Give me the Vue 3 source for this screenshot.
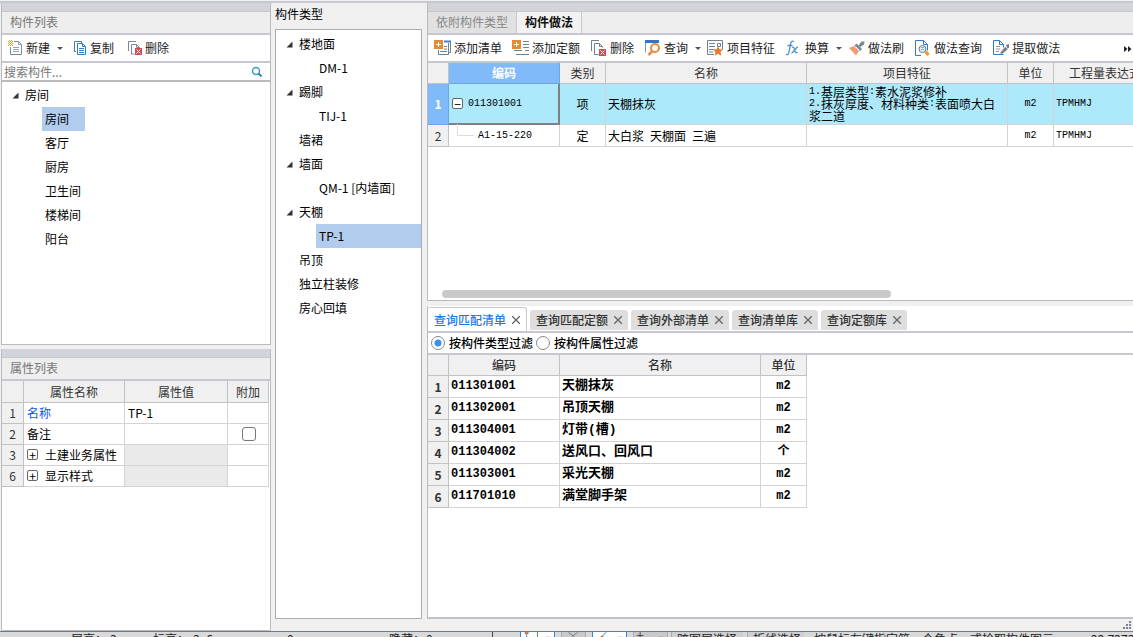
<script setup>
import { ref } from 'vue'

const roomTree = [
  { text: '房间', level: 0, open: true },
  { text: '房间', level: 1, selected: true },
  { text: '客厅', level: 1 },
  { text: '厨房', level: 1 },
  { text: '卫生间', level: 1 },
  { text: '楼梯间', level: 1 },
  { text: '阳台', level: 1 },
]
const typeTree = [
  { text: '楼地面', level: 0, open: true },
  { text: 'DM-1', level: 1 },
  { text: '踢脚', level: 0, open: true },
  { text: 'TIJ-1', level: 1 },
  { text: '墙裙', level: 0 },
  { text: '墙面', level: 0, open: true },
  { text: 'QM-1 [内墙面]', level: 1 },
  { text: '天棚', level: 0, open: true },
  { text: 'TP-1', level: 1, selected: true },
  { text: '吊顶', level: 0 },
  { text: '独立柱装修', level: 0 },
  { text: '房心回填', level: 0 },
]
const tools = [
  { icon: 'addList', text: '添加清单' },
  { icon: 'addQuota', text: '添加定额' },
  { icon: 'del', text: '删除' },
  { icon: 'query', text: '查询', menu: true },
  { icon: 'feature', text: '项目特征' },
  { icon: 'fx', text: '换算', menu: true },
  { icon: 'brush', text: '做法刷' },
  { icon: 'docQuery', text: '做法查询' },
  { icon: 'extract', text: '提取做法' },
]
const queryTabs = ['查询匹配清单', '查询匹配定额', '查询外部清单', '查询清单库', '查询定额库']
const matches = [
  ['011301001', '天棚抹灰', 'm2'],
  ['011302001', '吊顶天棚', 'm2'],
  ['011304001', '灯带(槽)', 'm2'],
  ['011304002', '送风口、回风口', '个'],
  ['011303001', '采光天棚', 'm2'],
  ['011701010', '满堂脚手架', 'm2'],
]
const feature = ['1.基层类型:素水泥浆修补', '2.抹灰厚度、材料种类:表面喷大白', '浆二道']
const filter = ref('type')
const keyword = ref('')

// Splits a string into half-width and full-width runs.
const runs = (s) => s.match(/[\x21-\x7e]+|[^\x21-\x7e]+/g).map((t) => ({ t, half: /[\x21-\x7e]/.test(t) }))
</script>

<template>
  <div class="window">
    <div class="dialog">
      <div class="col left">
        <section class="panel components">
          <div class="grip"></div>
          <h2 class="caption">构件列表</h2>
          <div class="toolbar narrow">
            <button class="tool">
              <svg width="16" height="16" viewBox="0 0 16 16" fill="none">
                <path d="M2.500 7v7.500h11v-10l-3-3H6" stroke="#7d8a94" />
                <path d="M10.500 1.500v3h3M5 7.500h6M5 9.500h6M5 11.500h6" stroke="#98a2aa" />
                <path d="M0 1.500h5M0 3.500h5M0 5.500h5M1 .5h3M1 2.500h3M1 4.500h3" stroke="#f0a02c" stroke-dasharray="1 1" />
              </svg>新建<i class="arrow"></i>
            </button>
            <button class="tool">
              <svg width="16" height="16" viewBox="0 0 16 16" fill="none">
                <path d="M4 11.500H2.500v-10h7V3" stroke="#3b7cc4" />
                <path d="M5.500 3.500h5l3 3v8h-8zM10.500 3.500v3h3M7 8.500h5M7 10.500h5M7 12.500h5" stroke="#2e7ad0" />
              </svg>复制
            </button>
            <button class="tool">
              <svg width="16" height="16" viewBox="0 0 16 16" fill="none">
                <path d="M1.500 11V1.500H9M4.500 14h3M4.500 14V4.500h5l3 3v1M9.500 4.500v3h3" stroke="#7d8a94" />
                <rect x="8" y="8" width="7" height="7" fill="#cf4b50" />
                <path d="M9.500 9.500l4 4m0-4l-4 4" stroke="#fff" />
              </svg>删除
            </button>
          </div>
          <div class="search">
            <input v-model="keyword" type="text" placeholder="搜索构件..." aria-label="搜索构件" />
            <svg width="12" height="12" viewBox="0 0 12 12" fill="none">
              <circle cx="5" cy="5" r="3.500" stroke="#3a9ccc" stroke-width="1.500" />
              <path d="M7.500 7.500l3 3" stroke="#2f83b8" stroke-width="2" />
            </svg>
          </div>
          <ul class="tree rooms">
            <li v-for="(n, i) in roomTree" :key="i" :class="['lv' + n.level, { selected: n.selected }]">
              <svg v-if="n.open" class="twisty" width="7" height="7" viewBox="0 0 7 7"><path d="M6.500.5v6h-6z" fill="#333" /></svg>
              <span>{{ n.text }}</span>
            </li>
          </ul>
        </section>

        <section class="panel props">
          <div class="grip"></div>
          <h2 class="caption">属性列表</h2>
          <table class="grid props-grid">
            <colgroup><col class="w22" /><col class="w101" /><col class="w103" /><col class="w41" /></colgroup>
            <thead><tr><th></th><th>属性名称</th><th>属性值</th><th>附加</th></tr></thead>
            <tbody>
              <tr><th>1</th><td class="blue">名称</td><td>TP-1</td><td></td></tr>
              <tr><th>2</th><td>备注</td><td></td><td class="mid"><input type="checkbox" aria-label="备注附加" /></td></tr>
              <tr><th>3</th><td><button class="expand" aria-label="展开">+</button>土建业务属性</td><td class="off"></td><td></td></tr>
              <tr><th>6</th><td><button class="expand" aria-label="展开">+</button>显示样式</td><td class="off"></td><td></td></tr>
            </tbody>
          </table>
        </section>
      </div>

      <div class="col middle">
        <h2 class="label">构件类型</h2>
        <ul class="tree types">
          <li v-for="(n, i) in typeTree" :key="i" :class="['lv' + n.level, { selected: n.selected }]">
            <svg v-if="n.open" class="twisty" width="7" height="7" viewBox="0 0 7 7"><path d="M6.500.5v6h-6z" fill="#333" /></svg>
            <span>{{ n.text }}</span>
          </li>
        </ul>
      </div>

      <div class="col right">
        <section class="panel method">
          <div class="grip"></div>
          <div class="tabs">
            <button class="tab">依附构件类型</button>
            <button class="tab on">构件做法</button>
          </div>
          <div class="toolbar wide">
            <button v-for="t in tools" :key="t.text" class="tool">
              <svg width="18" height="16" viewBox="0 0 18 16" fill="none">
                <g v-if="t.icon === 'addList'">
                  <path d="M10 1.500h6.500v11H15M14.500 3v11.500h-10V10M6 11.500h7M10 6.500h3M10 9h3" stroke="#70818f" />
                  <path d="M10 1.500h7" stroke="#3f83d3" stroke-width="2" />
                  <rect x="0" y="0" width="9" height="9" fill="#e88a35" /><path d="M4.500 2v5M2 4.500h5" stroke="#fff" />
                </g>
                <g v-else-if="t.icon === 'addQuota'">
                  <path d="M11 1.500h6M11 4.500h6M11 7.500h6M2 10.500h8M13 10.500h4M4 14.500h13" stroke="#70818f" />
                  <rect x="0" y="0" width="9" height="9" fill="#e88a35" /><path d="M4.500 2v5M2 4.500h5" stroke="#fff" />
                </g>
                <g v-else-if="t.icon === 'del'">
                  <path d="M1.500 11V.5H9M4.500 14.500h4M4.500 14.500v-11h5l3 3v1M9.500 3.500v3h3" stroke="#70818f" />
                  <rect x="9" y="9" width="7" height="7" fill="#cf4b50" /><path d="M10.500 10.500l4 4m0-4l-4 4" stroke="#fff" />
                </g>
                <g v-else-if="t.icon === 'query'">
                  <path d="M1.500 12.500V1M14.500 3V1" stroke="#7f97ad" /><path d="M1 1.500h14" stroke="#2e75cc" stroke-width="3" />
                  <circle cx="11" cy="8" r="4" fill="#fff" stroke="#ee8b3a" stroke-width="2" /><path d="M8.500 11l-4 4" stroke="#ee8b3a" stroke-width="2.500" />
                </g>
                <g v-else-if="t.icon === 'feature'">
                  <path d="M7 14.500H.5v-14h15v9M2 3.500h6M2 6.500h6M2 9.500h5M2 12h4M10.500 3.500h3v3h-3z" stroke="#70818f" />
                  <path d="M11 6l1.500 3.200 3.500.3-2.500 2.500.8 3.800-3.300-2-3.300 2 .8-3.800L6 9.500l3.500-.3z" fill="#e77a2c" />
                </g>
                <g v-else-if="t.icon === 'fx'" stroke="#4a90d6" stroke-width="1.300">
                  <path d="M9 1.500c-2-1-3 0-3.500 2.500L4 12c-.5 2.500-1.500 3-3 2.500M2.500 5.500h5" />
                  <path d="M7 7.500c2-1 2 0 2.700 2.700s1.500 3 3 2M13 7c-2 0-4 6-6.500 6" />
                </g>
                <g v-else-if="t.icon === 'brush'">
                  <path d="M1 8l5-2 5 5-3 4.500z" fill="#f79a72" /><path d="M6.500 5.500l2-2 5.500 5.500-2 2z" fill="#788791" />
                  <path d="M10.500 5.500l3-4 3 0-.5 3-3.500 2.500z" fill="#788791" /><path d="M8 7l3 3" stroke="#fff" />
                </g>
                <g v-else-if="t.icon === 'docQuery'">
                  <path d="M7 15.500H1.500V.5h8l4 4v6M9.500.5v4h4" stroke="#2e7ad0" />
                  <circle cx="8.500" cy="9" r="3.500" fill="#e4eef8" stroke="#67809a" /><path d="M7 9.500h3M7 7.500h3" stroke="#8fa8c0" /><path d="M11.500 11.500l3 3.500" stroke="#f09a22" stroke-width="3" />
                </g>
                <g v-else>
                  <path d="M11.500 14.500h-10V.5h6l4 4v3M7.500.5v4h4" stroke="#2e7ad0" />
                  <path d="M4 6.500h4M4 9h4M4 11.500h3" stroke="#8a97a3" /><path d="M8 13l5-6 3 2-6 5z" fill="#73818e" /><path d="M14 5l3-1v4l-2 0z" fill="#73818e" />
                </g>
              </svg>{{ t.text }}<i v-if="t.menu" class="arrow"></i>
            </button>
            <button class="more" aria-label="更多">
              <svg width="8" height="7" viewBox="0 0 8 7"><path d="M0 0l3.500 3L0 6zM4 0l3.500 3L4 6z" fill="#222" /></svg>
            </button>
          </div>
          <div class="sheet">
            <table class="grid method-grid">
              <colgroup><col class="w21" /><col class="w111" /><col class="w46" /><col class="w201" /><col class="w201" /><col class="w46" /><col class="w103" /></colgroup>
              <thead><tr><th></th><th class="active">编码</th><th>类别</th><th>名称</th><th>项目特征</th><th>单位</th><th>工程量表达式</th></tr></thead>
              <tbody>
                <tr class="current">
                  <th>1</th>
                  <td class="cell code"><div class="node"><button class="expand" aria-label="折叠">−</button><span class="half">011301001</span></div></td>
                  <td class="mid">项</td><td>天棚抹灰</td>
                  <td><div v-for="line in feature" :key="line" class="line"><span v-for="(r, i) in runs(line)" :key="i" :class="{ half: r.half }">{{ r.t }}</span></div></td>
                  <td class="mid half">m2</td><td class="half">TPMHMJ</td>
                </tr>
                <tr>
                  <th>2</th>
                  <td><div class="node child"><i class="branch"></i><span class="half">A1-15-220</span></div></td>
                  <td class="mid">定</td><td>大白浆&ensp;天棚面&ensp;三遍</td><td></td><td class="mid half">m2</td><td class="half">TPMHMJ</td>
                </tr>
              </tbody>
            </table>
            <div class="scroll"><div class="thumb"></div></div>
          </div>
        </section>

        <section class="panel lookup">
          <div class="qtabs">
            <button v-for="(t, i) in queryTabs" :key="t" :class="['qtab', { on: i === 0 }]">
              {{ t }}<svg width="8" height="8" viewBox="0 0 8 8"><path d="M0 0l8 8M8 0l-8 8" stroke="#666" stroke-width="1.300" /></svg>
            </button>
          </div>
          <div class="filters">
            <label><input v-model="filter" type="radio" value="type" name="filter" />按构件类型过滤</label>
            <label><input v-model="filter" type="radio" value="prop" name="filter" />按构件属性过滤</label>
          </div>
          <table class="grid lookup-grid">
            <colgroup><col class="w21" /><col class="w111" /><col class="w201" /><col class="w46" /></colgroup>
            <thead><tr><th></th><th>编码</th><th>名称</th><th>单位</th></tr></thead>
            <tbody>
              <tr v-for="(m, i) in matches" :key="i">
                <th>{{ i + 1 }}</th><td>{{ m[0] }}</td><td>{{ m[1] }}</td><td class="mid">{{ m[2] }}</td>
              </tr>
            </tbody>
          </table>
        </section>
        <svg class="sizer" width="10" height="10" viewBox="0 0 10 10"><path d="M6 0h2v2H6zM3 3h2v2H3zM6 3h2v2H6zM0 6h2v2H0zM3 6h2v2H3zM6 6h2v2H6z" fill="#7b8290" /></svg>
      </div>
    </div>

    <footer class="status">
      <span>层高：</span><span>3</span><span>标高：</span><span>3~6</span><span>0</span><span>隐藏：</span><span>0</span>
      <span class="snaps">
        <i class="sep"></i>
        <svg class="snap on" viewBox="0 0 35 6" height="6" width="35"><path d="M4 0h4v2H4z" fill="#d2692a" /><path d="M6 2v4M17.500 0v6" stroke="#2e85dc" /><path d="M26 5.500h5" stroke="#444" /></svg>
        <svg class="snap small" viewBox="0 0 25 6" height="6" width="25"><path d="M7 0l5 4 5-4M12 4v2" stroke="#777" fill="none" /></svg>
        <svg class="snap on" viewBox="0 0 35 6" height="6" width="35"><path d="M9 5l5-5" stroke="#2e85dc" /><path d="M8 4h3v2H8z" fill="#d2692a" /><path d="M26 5.500h5" stroke="#444" /></svg>
        <svg class="snap" viewBox="0 0 35 6" height="6" width="35"><path d="M3 3.500h7M6.500 0v6M26 5.500h5" stroke="#444" /></svg>
      </span>
      <span class="pick">跨图层选择</span><span class="pick">折线选择</span><span>按鼠标左键指定第一个角点，或拾取构件图元</span><span>22.7273</span>
    </footer>
  </div>
</template>

<style>
html,
body {
  margin: 0;
  background: #f0f0f0;
}
</style>

<style scoped>
* {
  box-sizing: border-box;
}
.window {
  display: flex;
  flex-direction: column;
  height: 100vh;
  overflow: hidden;
  font: 12px/16px "Noto Sans CJK SC", sans-serif;
  color: #000;
}
button {
  font: inherit;
  color: inherit;
  background: none;
  border: 0;
  padding: 0;
  white-space: nowrap;
}
.dialog {
  flex: 1;
  min-height: 0;
  display: flex;
  margin-top: 1px;
  border-top: 2px solid #c5c8cc;
  background: #f0f0f0;
}
.col {
  display: flex;
  flex-direction: column;
  min-height: 0;
}
.left {
  width: 270px;
  margin-left: 1px;
  gap: 4px;
}
.middle {
  width: 147px;
  margin-left: 4px;
  padding-bottom: 12px;
}
.right {
  flex: 1;
  min-width: 0;
  margin-left: 5px;
  gap: 5px;
}
.panel {
  display: flex;
  flex-direction: column;
  min-height: 0;
  overflow: hidden;
  background: #fff;
  border: 1px solid #b9bbbf;
  border-top: 0;
}
.components { flex: 342 1 0; }
.props { flex: 281 1 0; }
.grip {
  flex: none;
  height: 9px;
  background: #d3d4da;
  border-bottom: 1px solid #c5c8cc;
}
.caption {
  flex: none;
  margin: 0;
  height: 23px;
  padding-left: 8px;
  background: #eee;
  border-bottom: 2px solid #c5c8cc;
  font: 12px/20px "Noto Sans CJK SC", sans-serif;
  color: #777;
}
.toolbar {
  flex: none;
  display: flex;
  align-items: center;
  height: 28px;
  padding: 0 5px 0 6px;
  border-bottom: 2px solid #c5c8cc;
  color: #222;
}
.narrow { gap: 13px; }
.wide { gap: 10px; }
.tool {
  display: flex;
  align-items: center;
  gap: 2px;
}
.arrow {
  margin: 0 -4px 0 5px;
  border: 3px solid transparent;
  border-top-color: #555;
  border-bottom: 0;
}
.search {
  flex: none;
  display: flex;
  align-items: center;
  height: 19px;
  padding-right: 7px;
  border-bottom: 2px solid #b9bbbf;
}
.search input {
  flex: 1;
  min-width: 0;
  border: 0;
  outline: 0;
  padding: 0 2px;
  height: 16px;
  background: none;
  font: inherit;
}
.search input::placeholder { color: #777; }
.tree {
  flex: 1;
  min-height: 0;
  margin: 0;
  padding: 0;
  list-style: none;
}
.tree li {
  display: flex;
  align-items: center;
  height: 24px;
  line-height: 24px;
  padding-left: 20px;
  white-space: nowrap;
}
.tree .lv1 { padding-left: 40px; }
.tree span { padding: 0 3px; }
.tree .twisty {
  margin-left: -10px;
  margin-right: 3px;
}
.rooms { padding-top: 1px; }
.rooms .selected span {
  padding-right: 16px;
  background: #b2ccee;
}
.types {
  padding-top: 2px;
  background: #fff;
  border: 1px solid #acacac;
}
.types .selected span {
  flex: 1;
  background: #b2ccee;
}
.label {
  flex: none;
  margin: 0;
  height: 26px;
  font: 12px/22px "Noto Sans CJK SC", sans-serif;
}
.grid {
  flex: none;
  table-layout: fixed;
  border-collapse: separate;
  border-spacing: 0;
  width: 0;
}
.w21 { width: 21px; }
.w22 { width: 22px; }
.w41 { width: 41px; }
.w46 { width: 46px; }
.w101 { width: 101px; }
.w103 { width: 103px; }
.w111 { width: 111px; }
.w201 { width: 201px; }
.grid th {
  padding: 0;
  background: #f0f0f0;
  border: solid #c0c2c6;
  border-width: 0 1px 1px 0;
  font-weight: normal;
  color: #333;
  white-space: nowrap;
}
.grid td {
  padding: 0 2px;
  border: solid #d4d4d4;
  border-width: 0 1px 1px 0;
  white-space: nowrap;
}
.grid .mid { text-align: center; }
.half {
  font-family: "Liberation Mono", monospace;
  font-size: 10px;
}
.props-grid tr { height: 21px; }
.props-grid thead tr { height: 22px; }
.props-grid td { padding-left: 3px; }
.grid .off { background: #eaeaea; }
.grid .blue { color: #0a54f0; }
.props-grid input {
  appearance: none;
  display: block;
  width: 14px;
  height: 14px;
  margin: 0 auto;
  border: 1px solid #777;
  border-radius: 3px;
  background: #fff;
}
.expand {
  display: inline-flex;
  align-items: center;
  justify-content: center;
  width: 11px;
  height: 11px;
  margin-right: 7px;
  border: 1px solid #666;
  border-radius: 2px;
  background: #fff;
  line-height: 9px;
}
.method { flex: 299 1 0; border-right: 0; }
.tabs {
  flex: none;
  display: flex;
  height: 23px;
  background: #eee;
  border-bottom: 2px solid #c5c8cc;
}
.tab {
  padding: 0 8px 2px;
  border-right: 1px solid #c5c8cc;
  background: #e1e1e1;
  color: #888;
}
.tab.on {
  background: #f2f2f2;
  color: #111;
  font-weight: bold;
}
.more { margin-left: auto; margin-right: -4px; }
.sheet {
  flex: 1;
  display: flex;
  flex-direction: column;
  overflow: hidden;
}
.method-grid thead tr { height: 21px; }
.method-grid tbody tr { height: 22px; }
.method-grid tbody .current { height: 41px; background: #aee9fb; }
.method-grid .active,
.current th {
  background: #80baf9;
  border-color: #6aa7ea;
  color: #fff;
  font-weight: bold;
}
.grid .cell {
  border-right: 2px solid #808080;
  border-bottom: 2px solid #808080;
}
.line {
  display: flex;
  align-items: center;
  height: 12px;
}
.node {
  display: flex;
  align-items: center;
}
.code .expand { margin: 0 5px 0 1px; }
.branch {
  width: 17px;
  height: 12px;
  margin: -12px 4px 0 6px;
  border: solid #ddd;
  border-width: 0 0 1px 1px;
}
.scroll {
  margin-top: auto;
  padding: 0 0 2px 14px;
}
.thumb {
  width: 65%;
  height: 8px;
  border-radius: 4px;
  background: #c9c9c9;
}
.lookup { flex: 313 1 0; border-right: 0; border-bottom: 2px solid #c0c1c9; }
.qtabs {
  flex: none;
  display: flex;
  align-items: flex-end;
  gap: 3px;
  height: 27px;
  border-bottom: 2px solid #c5c8cc;
}
.qtab {
  display: flex;
  align-items: center;
  gap: 6px;
  height: 20px;
  margin-bottom: 1px;
  padding: 0 6px;
  background: #dedede;
  border-radius: 3px 3px 0 0;
  color: #333;
  font-weight: 500;
}
.qtab.on {
  height: 24px;
  margin-bottom: 0;
  background: #fff;
  border: 1px solid #c5c8cc;
  border-width: 1px 1px 0 0;
  color: #1c7ae0;
}
.filters {
  flex: none;
  display: flex;
  align-items: center;
  height: 22px;
  gap: 3px;
  padding-left: 3px;
  border-bottom: 2px solid #c5c8cc;
  font-weight: 500;
}
.filters label {
  display: flex;
  align-items: center;
  gap: 4px;
}
.filters input {
  appearance: none;
  width: 14px;
  height: 14px;
  margin: 0;
  border: 1px solid #888;
  border-radius: 50%;
  background: #fff;
}
.filters input:checked {
  background: radial-gradient(circle, #3c90ee 3px, #fff 4px);
}
.lookup-grid tr { height: 22px; }
.lookup-grid thead tr { height: 21px; }
.lookup-grid thead th { font-weight: 500; }
.lookup-grid tbody th { font-weight: bold; }
.lookup-grid td {
  font: bold 12px/16px "Liberation Mono", "Noto Sans CJK SC", monospace;
  padding-bottom: 2px;
}
.lookup-grid td:nth-child(3) { font-size: 13px; }
.sizer { flex: none; align-self: flex-end; margin-top: -3px; }
.status {
  flex: none;
  display: grid;
  grid-template-columns: 39px 43px 40px 94px 102px 37px 66px 185px 76px 61px 277px 1fr;
  height: 6px;
  padding-left: 71px;
  overflow: hidden;
  border-top: 1px solid #747a82;
  background: #d9d9d9;
  line-height: 14px;
  white-space: nowrap;
  color: #222;
}
.snaps {
  display: flex;
  gap: 6px;
  height: 6px;
}
.sep {
  width: 22px;
  border-left: 1px solid #444;
}
.snap {
  flex: none;
  background: #c9c9c9;
  border: solid #aaa;
  border-width: 0 1px;
}
.snap.on {
  background: #fff;
  border-color: #2e85dc;
}
.pick {
  margin: 0 10px 0 -6px;
  padding-left: 5px;
  border-left: 1px solid #aaa;
  background: #cfcfcf;
}
</style>
